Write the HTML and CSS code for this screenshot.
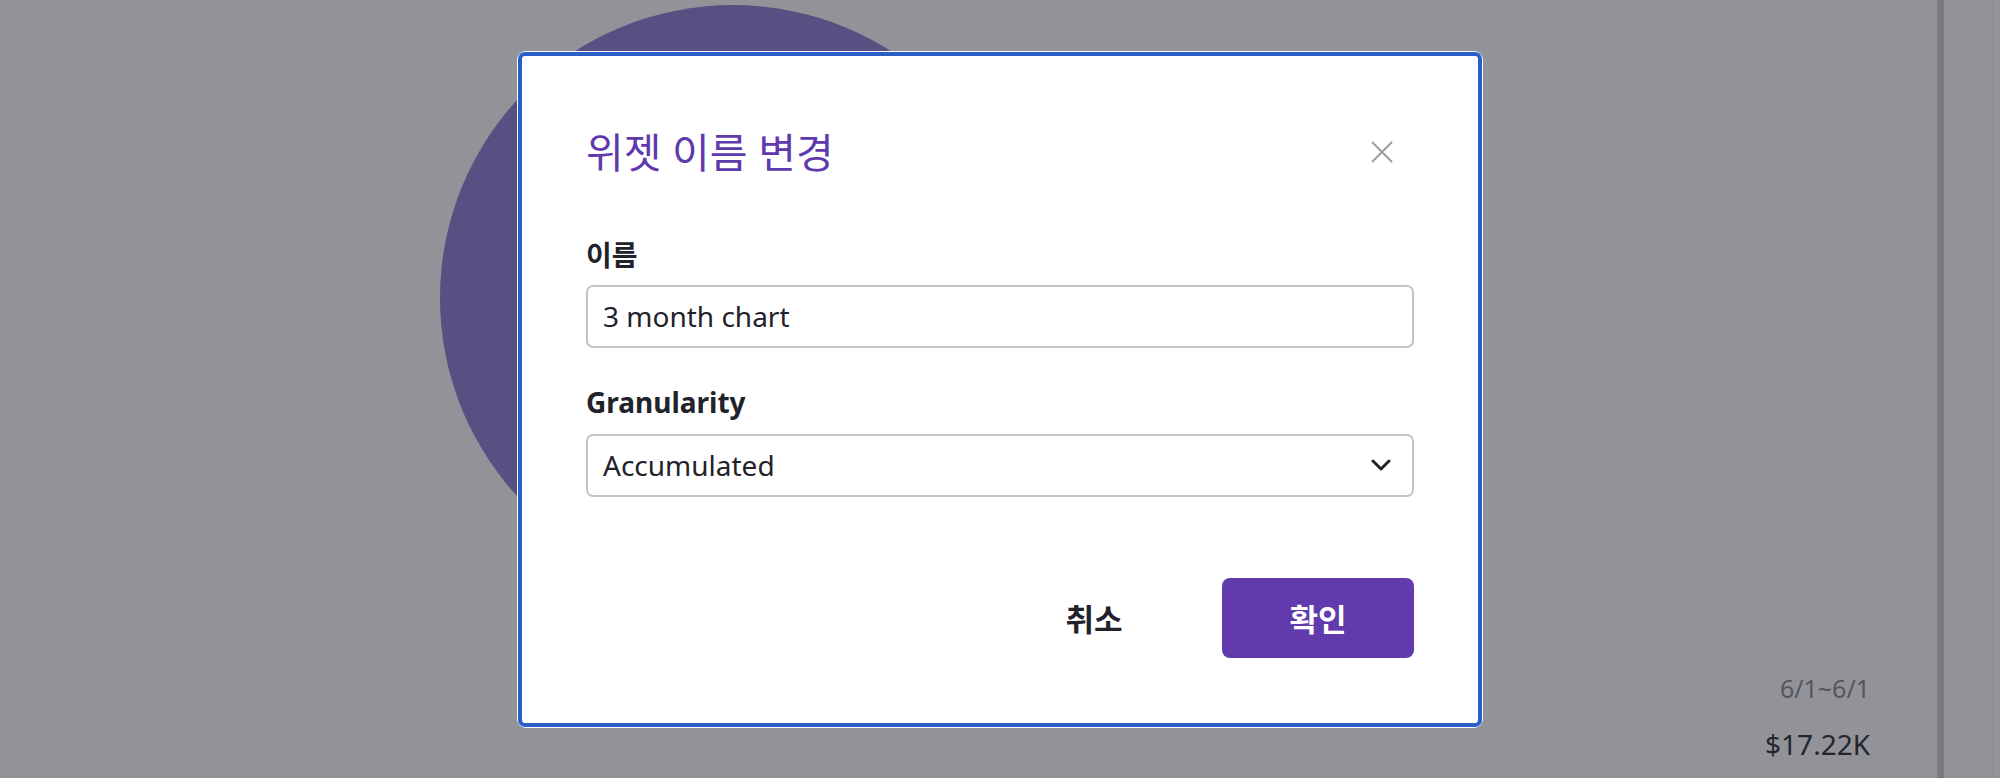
FILE: index.html
```html
<!DOCTYPE html>
<html lang="ko">
<head>
<meta charset="utf-8">
<title>위젯 이름 변경</title>
<link rel="stylesheet" href="styles.css">
</head>
<body>
<div class="page">
  <main class="canvas">
    <div class="pie"></div>
    <div class="summary">
      <div class="range">6/1~6/1</div>
      <div class="total">$17.22K</div>
    </div>
  </main>
  <aside class="rail"><div class="rail-line"></div></aside>
</div>

<div class="overlay">
  <div class="modal" role="dialog" aria-labelledby="modal-title">
    <div class="modal-inner">
      <header class="modal-header">
        <h2 id="modal-title" class="modal-title">위젯 이름 변경</h2>
        <button class="close-btn" aria-label="닫기">
          <svg width="22" height="22" viewBox="0 0 22 22"><path d="M1 1 L21 21 M21 1 L1 21" stroke="#9c9ca2" stroke-width="2" fill="none"/></svg>
        </button>
      </header>
      <div class="field field-name">
        <label class="field-label" for="name">이름</label>
        <input id="name" class="text-input" type="text" value="3 month chart">
      </div>
      <div class="field field-gran">
        <div class="field-label">Granularity</div>
        <div class="select" role="combobox">
          <span>Accumulated</span>
          <svg width="20" height="12" viewBox="0 0 20 12"><path d="M2 2 L10 10 L18 2" stroke="#23232b" stroke-width="3" fill="none" stroke-linecap="round" stroke-linejoin="round"/></svg>
        </div>
      </div>
      <footer class="modal-footer">
        <button class="btn btn-cancel">취소</button>
        <button class="btn btn-primary">확인</button>
      </footer>
    </div>
  </div>
</div>
</body>
</html>
```

FILE: styles.css
```css
* { box-sizing: border-box; }
html, body { margin: 0; padding: 0; }
body {
  width: 2000px;
  height: 778px;
  overflow: hidden;
  background: #929398;
  font-family: "Noto Sans", "Noto Sans CJK KR", sans-serif;
  position: relative;
}

.page {
  display: flex;
  height: 778px;
}

.canvas {
  flex: 1;
  display: flex;
  flex-direction: column;
  padding-top: 5px;
}

.pie {
  width: 586px;
  height: 586px;
  margin-left: 440px;
  border-radius: 50%;
  background: #575082;
}

.summary {
  align-self: flex-end;
  margin-top: 81px;
  margin-right: 67px;
  text-align: right;
}

.range {
  font-size: 25px;
  line-height: 32px;
  color: #55555d;
}

.total {
  margin-top: 22px;
  font-size: 28px;
  line-height: 36px;
  color: #25252d;
}

.rail {
  width: 63px;
  border-left: 7px solid #7a7a82;
  padding-right: 7px;
}

.rail-line {
  height: 100%;
  border-right: 1px solid #8b8c91;
}

.overlay {
  position: absolute;
  inset: 0;
  display: flex;
  align-items: center;
  justify-content: center;
}

.modal {
  width: 966px;
  background: #fff;
  padding: 1px;
  border-radius: 9px;
}

.modal-inner {
  border: 4px solid #2a5fc8;
  border-radius: 7px;
  padding: 64px 64px 65px;
}

.modal-header {
  display: flex;
  align-items: center;
  justify-content: space-between;
  height: 64px;
}

.modal-title {
  margin: 0;
  font-size: 41px;
  line-height: 64px;
  font-weight: 400;
  color: #5e3aad;
}

.close-btn {
  width: 64px;
  height: 64px;
  border: 0;
  background: none;
  padding: 0;
  display: flex;
  align-items: center;
  justify-content: center;
}

.field-name { margin-top: 53px; }
.field-gran { margin-top: 36px; }

.field-label {
  display: block;
  font-size: 28px;
  line-height: 36px;
  font-weight: 700;
  color: #22222a;
  margin-bottom: 12px;
}

.field-gran .field-label { margin-bottom: 14px; }

.text-input,
.select {
  width: 100%;
  height: 63px;
  border: 2px solid #c5c5c9;
  border-radius: 7px;
  padding: 0 21px 0 15px;
  font-family: "Noto Sans", "Noto Sans CJK KR", sans-serif;
  font-size: 28px;
  color: #22222a;
  background: #fff;
  outline: none;
}

.select {
  display: flex;
  align-items: center;
  justify-content: space-between;
}

.modal-footer {
  margin-top: 81px;
  display: flex;
  justify-content: flex-end;
  gap: 32px;
}

.btn {
  width: 192px;
  height: 80px;
  border: 0;
  border-radius: 8px;
  font-family: "Noto Sans", "Noto Sans CJK KR", sans-serif;
  font-size: 31px;
  font-weight: 700;
}

.btn-cancel {
  background: transparent;
  color: #22222a;
}

.btn-primary {
  background: #613bad;
  color: #fff;
}
```
